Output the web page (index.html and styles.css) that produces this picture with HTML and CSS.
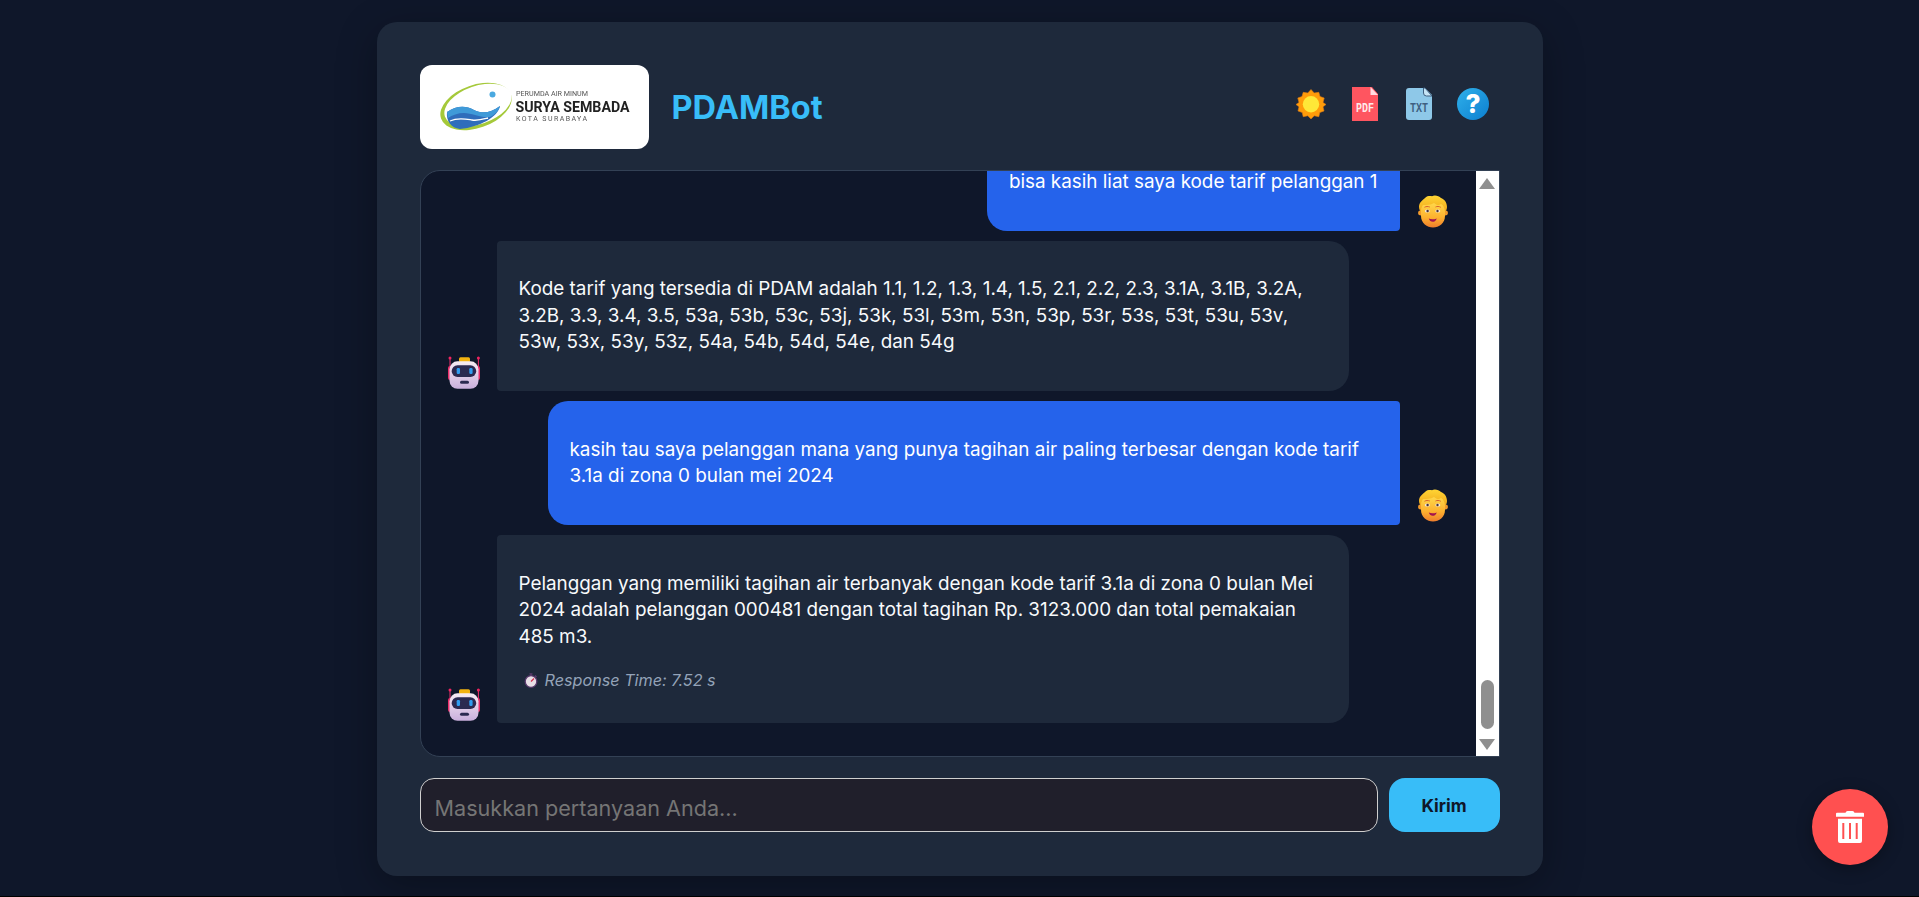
FILE: index.html
```html
<!doctype html>
<html>
  <head>
    <meta charset="utf-8" />
    <title>PDAMBot</title>
    <link rel="stylesheet" href="styles.css">
  </head>
  <body>
    <svg class="defs" width="0" height="0">
      <defs>
        <linearGradient id="skin" x1="0" y1="0" x2="0" y2="1">
          <stop offset="0" stop-color="#ffd84a" />
          <stop offset="0.6" stop-color="#fdb02f" />
          <stop offset="1" stop-color="#ee7d2c" />
        </linearGradient>
        <linearGradient id="hair" x1="0" y1="0" x2="0" y2="1">
          <stop offset="0" stop-color="#ffd534" />
          <stop offset="1" stop-color="#f0a71c" />
        </linearGradient>
        <linearGradient id="shell" x1="0" y1="0" x2="0" y2="1">
          <stop offset="0" stop-color="#f7ecf3" />
          <stop offset="1" stop-color="#c9afdc" />
        </linearGradient>
        <linearGradient id="helpfill" x1="0" y1="0" x2="1" y2="1">
          <stop offset="0" stop-color="#2fb0ea" />
          <stop offset="1" stop-color="#0c7fd0" />
        </linearGradient>
        <symbol id="user-face" viewBox="0 0 36 36">
          <circle cx="5.400" cy="18" r="2.400" fill="#f39a2b" />
          <circle cx="30.600" cy="18" r="2.400" fill="#f39a2b" />
          <path d="M6 13 C6 9 7 8 9 8 H27 C29 8 30 9 30 13 V21 C30 28 24 32.500 18 32.500 C12 32.500 6 28 6 21 Z" fill="url(#skin)" />
          <path d="M4 12 C4 7 8 5 10 3 C12 .8 15 1 17 1.200 C19 -.2 24 .4 26 3 C29 4 32 7 32 12 C32 14 31 16 30 17 C30 13 28 10 26 9 C24 11 21 10 19 8 C16 10 11 10 8 10 C6.500 12 6 14 6 17 C5 16 4 14 4 12 Z" fill="url(#hair)" />
          <path d="M9.500 12.300 C11 11.300 13 11.300 14.800 12" stroke="#d9632a" stroke-width="1" fill="none" />
          <path d="M20.500 12 C22 11.200 24 11.200 25.800 12.300" stroke="#d9632a" stroke-width="1" fill="none" />
          <ellipse cx="12.300" cy="16" rx="2.500" ry="1.600" fill="#f3e9e4" />
          <ellipse cx="22.800" cy="16" rx="2.500" ry="1.600" fill="#f3e9e4" />
          <circle cx="12.600" cy="16" r="1.200" fill="#4a3338" />
          <circle cx="22.500" cy="16" r="1.200" fill="#4a3338" />
          <path d="M13.800 23.600 C16 24.500 19 24.500 21.800 23.400 C21 26 19 26.700 17.500 26.700 C16 26.700 14.500 26 13.800 23.600 Z" fill="#a3134f" />
        </symbol>
        <symbol id="bot-face" viewBox="0 0 36 36">
          <path d="M4 3 V14 M32.400 3 V14" stroke="#ee2f6b" stroke-width="1" />
          <circle cx="4" cy="3" r="1.500" fill="#f0245f" />
          <circle cx="32.400" cy="3" r="1.500" fill="#f0245f" />
          <rect x="13" y="2.300" width="11" height="5" rx="1.500" fill="#f2b311" />
          <rect x="2" y="11" width="32" height="14" rx="2" fill="#ea2e6a" />
          <rect x="3.500" y="6.300" width="29" height="27.500" rx="8" fill="url(#shell)" />
          <rect x="5.700" y="10.300" width="24.500" height="11.700" rx="5.800" fill="#2b2a50" />
          <rect x="10.700" y="13" width="3.300" height="6" rx="1.200" fill="#2f9df0" />
          <rect x="23.300" y="13" width="3.300" height="6" rx="1.200" fill="#2f9df0" />
          <rect x="14" y="25.700" width="9" height="3" rx="1.500" fill="#2b2a50" />
        </symbol>
      </defs>
    </svg>

    <main class="card">
      <header class="top">
        <div class="logo">
          <svg width="229" height="84" viewBox="0 0 229 84">
            <ellipse cx="56" cy="41.500" rx="37" ry="21.500" transform="rotate(-19 56 41.500)" fill="#a5c93a" />
            <ellipse cx="58" cy="40" rx="35" ry="19" transform="rotate(-19 58 40)" fill="#fff" />
            <path d="M27 47 C36 41 45 40 54 45 C62 49 71 48 80 41 C78 52 60 62 40 64 C31 63 26 56 27 47 Z" fill="#2f6dbb" />
            <path d="M27 47 C36 41 45 40 54 45 C62 49 71 48 80 41 C79 46 74 50 70 52 C60 53 52 48 44 48 C38 48 32 50 28 53 Z" fill="#3f9ad8" />
            <path d="M30 56 C38 52 46 54 52 55 C58 56 64 54 68 53" stroke="#fff" stroke-width="1.300" fill="none" />
            <circle cx="72.500" cy="29.500" r="3" fill="#4aa9e0" />
            <text x="96" y="31" class="logo-small" textLength="72" lengthAdjust="spacingAndGlyphs">PERUMDA AIR MINUM</text>
            <text x="95.500" y="47" class="logo-big" textLength="114" lengthAdjust="spacingAndGlyphs">SURYA SEMBADA</text>
            <text x="96" y="56" class="logo-sub" textLength="71" lengthAdjust="spacing">KOTA SURABAYA</text>
          </svg>
        </div>
        <h1 class="title">PDAMBot</h1>
        <nav class="tools">
          <button class="tool" title="Tema">
            <svg width="34" height="34" viewBox="0 0 34 34">
              <polygon points="17,2.500 20.200,6 24.800,5.300 26,9.500 30.200,11 29,15.400 32,17.500 29,19.800 30,24 25.800,25.500 24.800,29.700 20.200,28.800 17,32 13.800,28.800 9.200,29.700 8.200,25.500 4,24 5,19.800 2,17.500 5,15.400 3.800,11 8,9.500 9.200,5.300 13.800,6" fill="#ff9c0a" stroke="#e07a12" stroke-width=".6" />
              <circle cx="17" cy="17.300" r="8.200" fill="#ffe838" />
            </svg>
          </button>
          <button class="tool" title="PDF">
            <svg width="34" height="34" viewBox="0 0 34 34">
              <path d="M4 0 H24 L30 7 V34 H4 Z" fill="#ff5560" />
              <path d="M22.500 0 L30 8 H22.500 Z" fill="#ffdbe0" />
              <text x="8" y="24.500" class="file-label pdf-label" textLength="18" lengthAdjust="spacingAndGlyphs">PDF</text>
            </svg>
          </button>
          <button class="tool" title="TXT">
            <svg width="34" height="34" viewBox="0 0 34 34">
              <path d="M7 1 H23 L30 8 V30 Q30 33 27 33 H7 Q4 33 4 30 V4 Q4 1 7 1 Z" fill="#8ec8e8" />
              <path d="M21.500 1 V6 Q21.500 9 24.500 9 H30 L23 1 Z" fill="#c6e4f4" stroke="#3e5f80" stroke-width="1" />
              <text x="8" y="24.500" class="file-label txt-label" textLength="18" lengthAdjust="spacingAndGlyphs">TXT</text>
            </svg>
          </button>
          <button class="tool" title="Bantuan">
            <svg width="34" height="34" viewBox="0 0 34 34">
              <circle cx="17" cy="17" r="16" fill="url(#helpfill)" />
              <text x="17" y="26" class="help-label">?</text>
            </svg>
          </button>
        </nav>
      </header>

      <section class="chat">
        <div class="messages">
          <div class="row row-user">
            <div class="bubble bubble-user">bisa kasih liat saya kode tarif pelanggan 1</div>
            <svg class="avatar"><use href="#user-face" /></svg>
          </div>
          <div class="row">
            <svg class="avatar"><use href="#bot-face" /></svg>
            <div class="bubble bubble-bot">Kode tarif yang tersedia di PDAM adalah 1.1, 1.2, 1.3, 1.4, 1.5, 2.1, 2.2, 2.3, 3.1A, 3.1B, 3.2A, 3.2B, 3.3, 3.4, 3.5, 53a, 53b, 53c, 53j, 53k, 53l, 53m, 53n, 53p, 53r, 53s, 53t, 53u, 53v, 53w, 53x, 53y, 53z, 54a, 54b, 54d, 54e, dan 54g</div>
          </div>
          <div class="row row-user">
            <div class="bubble bubble-user">kasih tau saya pelanggan mana yang punya tagihan air paling terbesar dengan kode tarif 3.1a di zona 0 bulan mei 2024</div>
            <svg class="avatar"><use href="#user-face" /></svg>
          </div>
          <div class="row">
            <svg class="avatar"><use href="#bot-face" /></svg>
            <div class="bubble bubble-bot">
              Pelanggan yang memiliki tagihan air terbanyak dengan kode tarif 3.1a di zona 0 bulan Mei 2024 adalah pelanggan 000481 dengan total tagihan Rp. 3123.000 dan total pemakaian 485 m3.
              <div class="response-time">
                <svg width="14" height="15" viewBox="0 0 14 15">
                  <path d="M5.500 .8 H8.500 M7 1 V3 M11 2.500 L12.500 4" stroke="#5b3b6e" stroke-width="1.300" />
                  <circle cx="7" cy="8.500" r="5.800" fill="#e8dfe6" stroke="#5b3b6e" stroke-width="1.300" />
                  <path d="M7 8.500 L10 5.500" stroke="#d1304f" stroke-width="1.200" />
                </svg>
                <span>Response Time: 7.52 s</span>
              </div>
            </div>
          </div>
        </div>
        <div class="scrollbar">
          <span class="arrow arrow-up"></span>
          <span class="thumb"></span>
          <span class="arrow arrow-down"></span>
        </div>
      </section>

      <form class="composer">
        <input class="composer-input" type="text" placeholder="Masukkan pertanyaan Anda..." />
        <button class="send" type="button">Kirim</button>
      </form>
    </main>

    <button class="clear-fab" title="Hapus">
      <svg width="28" height="32" viewBox="0 0 28 32">
        <path d="M9.500 1.700 Q10 0 11.500 0 H16.500 Q18 0 18.500 1.700 H27 Q28 1.700 28 2.700 V5.700 H0 V2.700 Q0 1.700 1 1.700 Z" fill="#fff" />
        <path fill-rule="evenodd" d="M2 7.700 H26 V30 Q26 32 24 32 H4 Q2 32 2 30 Z M6.300 12 V28 H8.300 V12 Z M13 12 V28 H15 V12 Z M19.700 12 V28 H21.700 V12 Z" fill="#fff" />
      </svg>
    </button>
  </body>
</html>
```

FILE: styles.css
```css
html {
  background: #000;
}
body {
  margin: 0;
  height: 896px;
  padding-top: 22px;
  box-sizing: border-box;
  overflow: hidden;
  background: #0f172a;
  font-family: "Inter", "Liberation Sans", sans-serif;
  color: #f8fafc;
}
.defs {
  position: absolute;
}
.card {
  width: 1166px;
  height: 854px;
  margin: 0 auto;
  padding: 43px 43px 44px;
  box-sizing: border-box;
  display: flex;
  flex-direction: column;
  background: #1e293b;
  border-radius: 20px;
  box-shadow: 0 10px 40px rgba(0, 0, 0, 0.3);
}
.top {
  display: flex;
  align-items: center;
  height: 84px;
  margin-bottom: 21px;
}
.logo {
  width: 229px;
  height: 84px;
  background: #fff;
  border-radius: 12px;
  overflow: hidden;
}
.logo svg {
  display: block;
  filter: blur(0.3px);
}
.logo-small {
  font: 400 7.500px "Roboto", sans-serif;
  fill: #555;
}
.logo-big {
  font: 700 15px "Roboto", sans-serif;
  fill: #222;
}
.logo-sub {
  font: 400 7px "Roboto", sans-serif;
  fill: #555;
}
.title {
  margin: 0 0 0 23px;
  font-size: 32.500px;
  font-weight: 700;
  color: #38bdf8;
}
.tools {
  display: flex;
  gap: 20px;
  margin-left: auto;
  margin-right: 10px;
  margin-bottom: 6px;
}
.tool {
  width: 34px;
  height: 34px;
  padding: 0;
  border: none;
  background: none;
}
.tool svg {
  display: block;
}
.file-label {
  font-family: "Liberation Mono", monospace;
  font-weight: 700;
  font-size: 12px;
}
.pdf-label {
  fill: #ffe9ea;
}
.txt-label {
  fill: #3e5f80;
}
.help-label {
  font: 800 26px "Inter", sans-serif;
  fill: #fff;
  text-anchor: middle;
}
.chat {
  display: flex;
  height: 587px;
  box-sizing: border-box;
  background: #0f172a;
  border: 1px solid #334155;
  border-radius: 20px 0 0 20px;
  overflow: hidden;
}
.messages {
  flex: 1;
  min-width: 0;
  display: flex;
  flex-direction: column;
  justify-content: flex-end;
  gap: 10px;
  padding: 0 25px 33px;
  overflow: hidden;
}
.row {
  display: flex;
  flex-shrink: 0;
  align-items: flex-end;
  gap: 15px;
}
.row-user {
  justify-content: flex-end;
}
.avatar {
  flex: none;
  width: 36px;
  height: 36px;
}
.bubble {
  max-width: 852px;
  padding: 35.600px 22px;
  box-sizing: border-box;
  font-size: 18.880px;
  line-height: 26.400px;
}
.bubble-user {
  background: #2563eb;
  color: #fff;
  border-radius: 20px 4px 4px 20px;
}
.bubble-bot {
  width: 852px;
  background: #1e293b;
  border-radius: 4px 20px 20px 4px;
}
.response-time {
  display: flex;
  align-items: center;
  gap: 7px;
  margin: 21px 0 -2.500px 5px;
  font-size: 16.200px;
  line-height: 19px;
  font-style: italic;
  color: #94a3b8;
}
.scrollbar {
  flex: none;
  width: 23px;
  display: flex;
  flex-direction: column;
  align-items: center;
  padding: 7px 0 6px;
  box-sizing: border-box;
  background: #fff;
}
.arrow {
  width: 0;
  height: 0;
  border-left: 8px solid transparent;
  border-right: 8px solid transparent;
}
.arrow-up {
  border-bottom: 11px solid #8f8f8f;
}
.arrow-down {
  border-top: 11px solid #8f8f8f;
}
.thumb {
  width: 13px;
  height: 49px;
  margin: auto 0 10px;
  border-radius: 7px;
  background: #8f8f8f;
}
.composer {
  display: flex;
  gap: 11px;
  margin-top: 21px;
}
.composer-input {
  flex: 1;
  min-width: 0;
  height: 54px;
  padding: 6px 14px 0;
  box-sizing: border-box;
  background: #201f2b;
  border: 1px solid #cfcfcf;
  border-radius: 14px;
  font-family: inherit;
  font-size: 21.600px;
  color: #fff;
}
.composer-input::placeholder {
  color: #757575;
}
.send {
  width: 111px;
  height: 54px;
  border: none;
  border-radius: 16px;
  background: #38bdf8;
  color: #0f172a;
  font-family: inherit;
  font-size: 17.400px;
  font-weight: 700;
}
.clear-fab {
  position: fixed;
  right: 31px;
  bottom: 32px;
  width: 76px;
  height: 76px;
  display: flex;
  align-items: center;
  justify-content: center;
  padding: 0;
  border: none;
  border-radius: 50%;
  background: #ff5050;
  box-shadow: 0 4px 16px rgba(0, 0, 0, 0.3);
}
```
